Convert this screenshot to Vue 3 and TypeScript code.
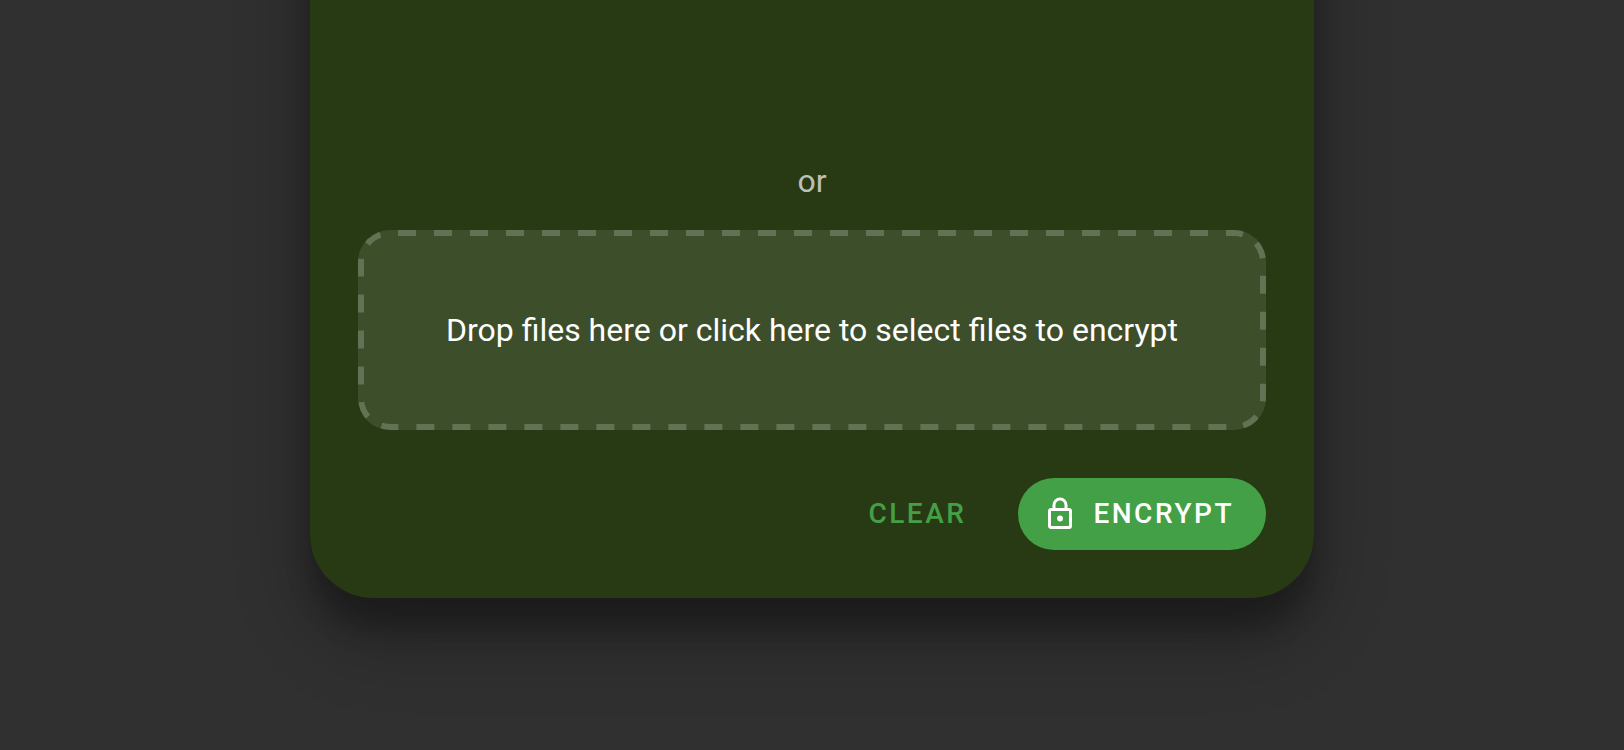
<script setup lang="ts">
import { ref } from 'vue'

const files = ref<File[]>([])
const picker = ref<HTMLInputElement | null>(null)

function onPick(event: Event): void {
  const input = event.target as HTMLInputElement
  files.value = Array.from(input.files ?? [])
}

function onDrop(event: DragEvent): void {
  files.value = Array.from(event.dataTransfer?.files ?? [])
}

function clear(): void {
  files.value = []
  if (picker.value) picker.value.value = ''
}
</script>

<template>
  <main class="page">
    <form class="card" @submit.prevent>
      <p class="divider">or</p>
      <label class="dropzone" @dragover.prevent @drop.prevent="onDrop">
        <svg class="outline" aria-hidden="true">
          <rect width="100%" height="100%" rx="32" />
        </svg>
        <input ref="picker" class="picker" type="file" multiple @change="onPick" />
        <span>Drop files here or click here to select files to encrypt</span>
      </label>
      <div class="actions">
        <button class="btn btn-text" type="button" @click="clear">CLEAR</button>
        <button class="btn btn-fill" type="submit">
          <svg class="icon" viewBox="0 0 24 24" aria-hidden="true">
            <path
              d="M12,17C10.89,17 10,16.1 10,15C10,13.89 10.89,13 12,13A2,2 0 0,1 14,15A2,2 0 0,1 12,17M18,20V10H6V20H18M18,8A2,2 0 0,1 20,10V20A2,2 0 0,1 18,22H6C4.89,22 4,21.1 4,20V10C4,8.89 4.89,8 6,8H7V6A5,5 0 0,1 12,1A5,5 0 0,1 17,6V8H18M12,3A3,3 0 0,0 9,6V8H15V6A3,3 0 0,0 12,3Z"
            />
          </svg>
          <span>ENCRYPT</span>
        </button>
      </div>
    </form>
  </main>
</template>

<style>
body {
  margin: 0;
  background: #303030;
}
</style>

<style scoped>
.page {
  box-sizing: border-box;
  min-height: 100vh;
  overflow: hidden;
  background: #303030;
  color: #fff;
  font-family: Roboto, "Noto Sans", sans-serif;
  font-size: 32px;
  line-height: 48px;
}

.card {
  box-sizing: border-box;
  width: 100%;
  max-width: 1004px;
  margin: -200px auto 0;
  padding: 357px 48px 48px;
  border-radius: 64px;
  background: #283a13;
  box-shadow:
    0 38px 76px rgba(0, 0, 0, 0.3),
    0 30px 24px rgba(0, 0, 0, 0.22);
}

.divider {
  margin: 0 0 25px;
  text-align: center;
  color: rgba(255, 255, 255, 0.7);
}

.dropzone {
  position: relative;
  box-sizing: border-box;
  display: flex;
  align-items: center;
  justify-content: center;
  min-height: 200px;
  padding: 32px;
  overflow: hidden;
  border-radius: 32px;
  background: rgba(255, 255, 255, 0.1);
  text-align: center;
  cursor: pointer;
}

/* The stroke runs along the outer edge, so its outer half is clipped away. */
.outline {
  position: absolute;
  inset: 0;
  width: 100%;
  height: 100%;
  fill: none;
  stroke: rgba(255, 255, 255, 0.2);
  stroke-width: 12px;
  stroke-dasharray: 18px;
  stroke-dashoffset: -8px;
  pointer-events: none;
}

.picker {
  position: absolute;
  width: 1px;
  height: 1px;
  opacity: 0;
}

.actions {
  display: flex;
  justify-content: flex-end;
  gap: 20px;
  margin-top: 48px;
}

.btn {
  display: flex;
  align-items: center;
  height: 72px;
  padding: 0 32px;
  border: 0;
  border-radius: 36px;
  background: transparent;
  font-family: inherit;
  font-size: 28px;
  font-weight: 500;
  line-height: 36px;
  letter-spacing: 0.09em;
  cursor: pointer;
}

.btn-text {
  color: #43a047;
}

.btn-fill {
  gap: 15px;
  padding-left: 24px;
  background: #43a047;
  color: #fff;
}

.icon {
  width: 36px;
  height: 36px;
  fill: currentColor;
}
</style>
